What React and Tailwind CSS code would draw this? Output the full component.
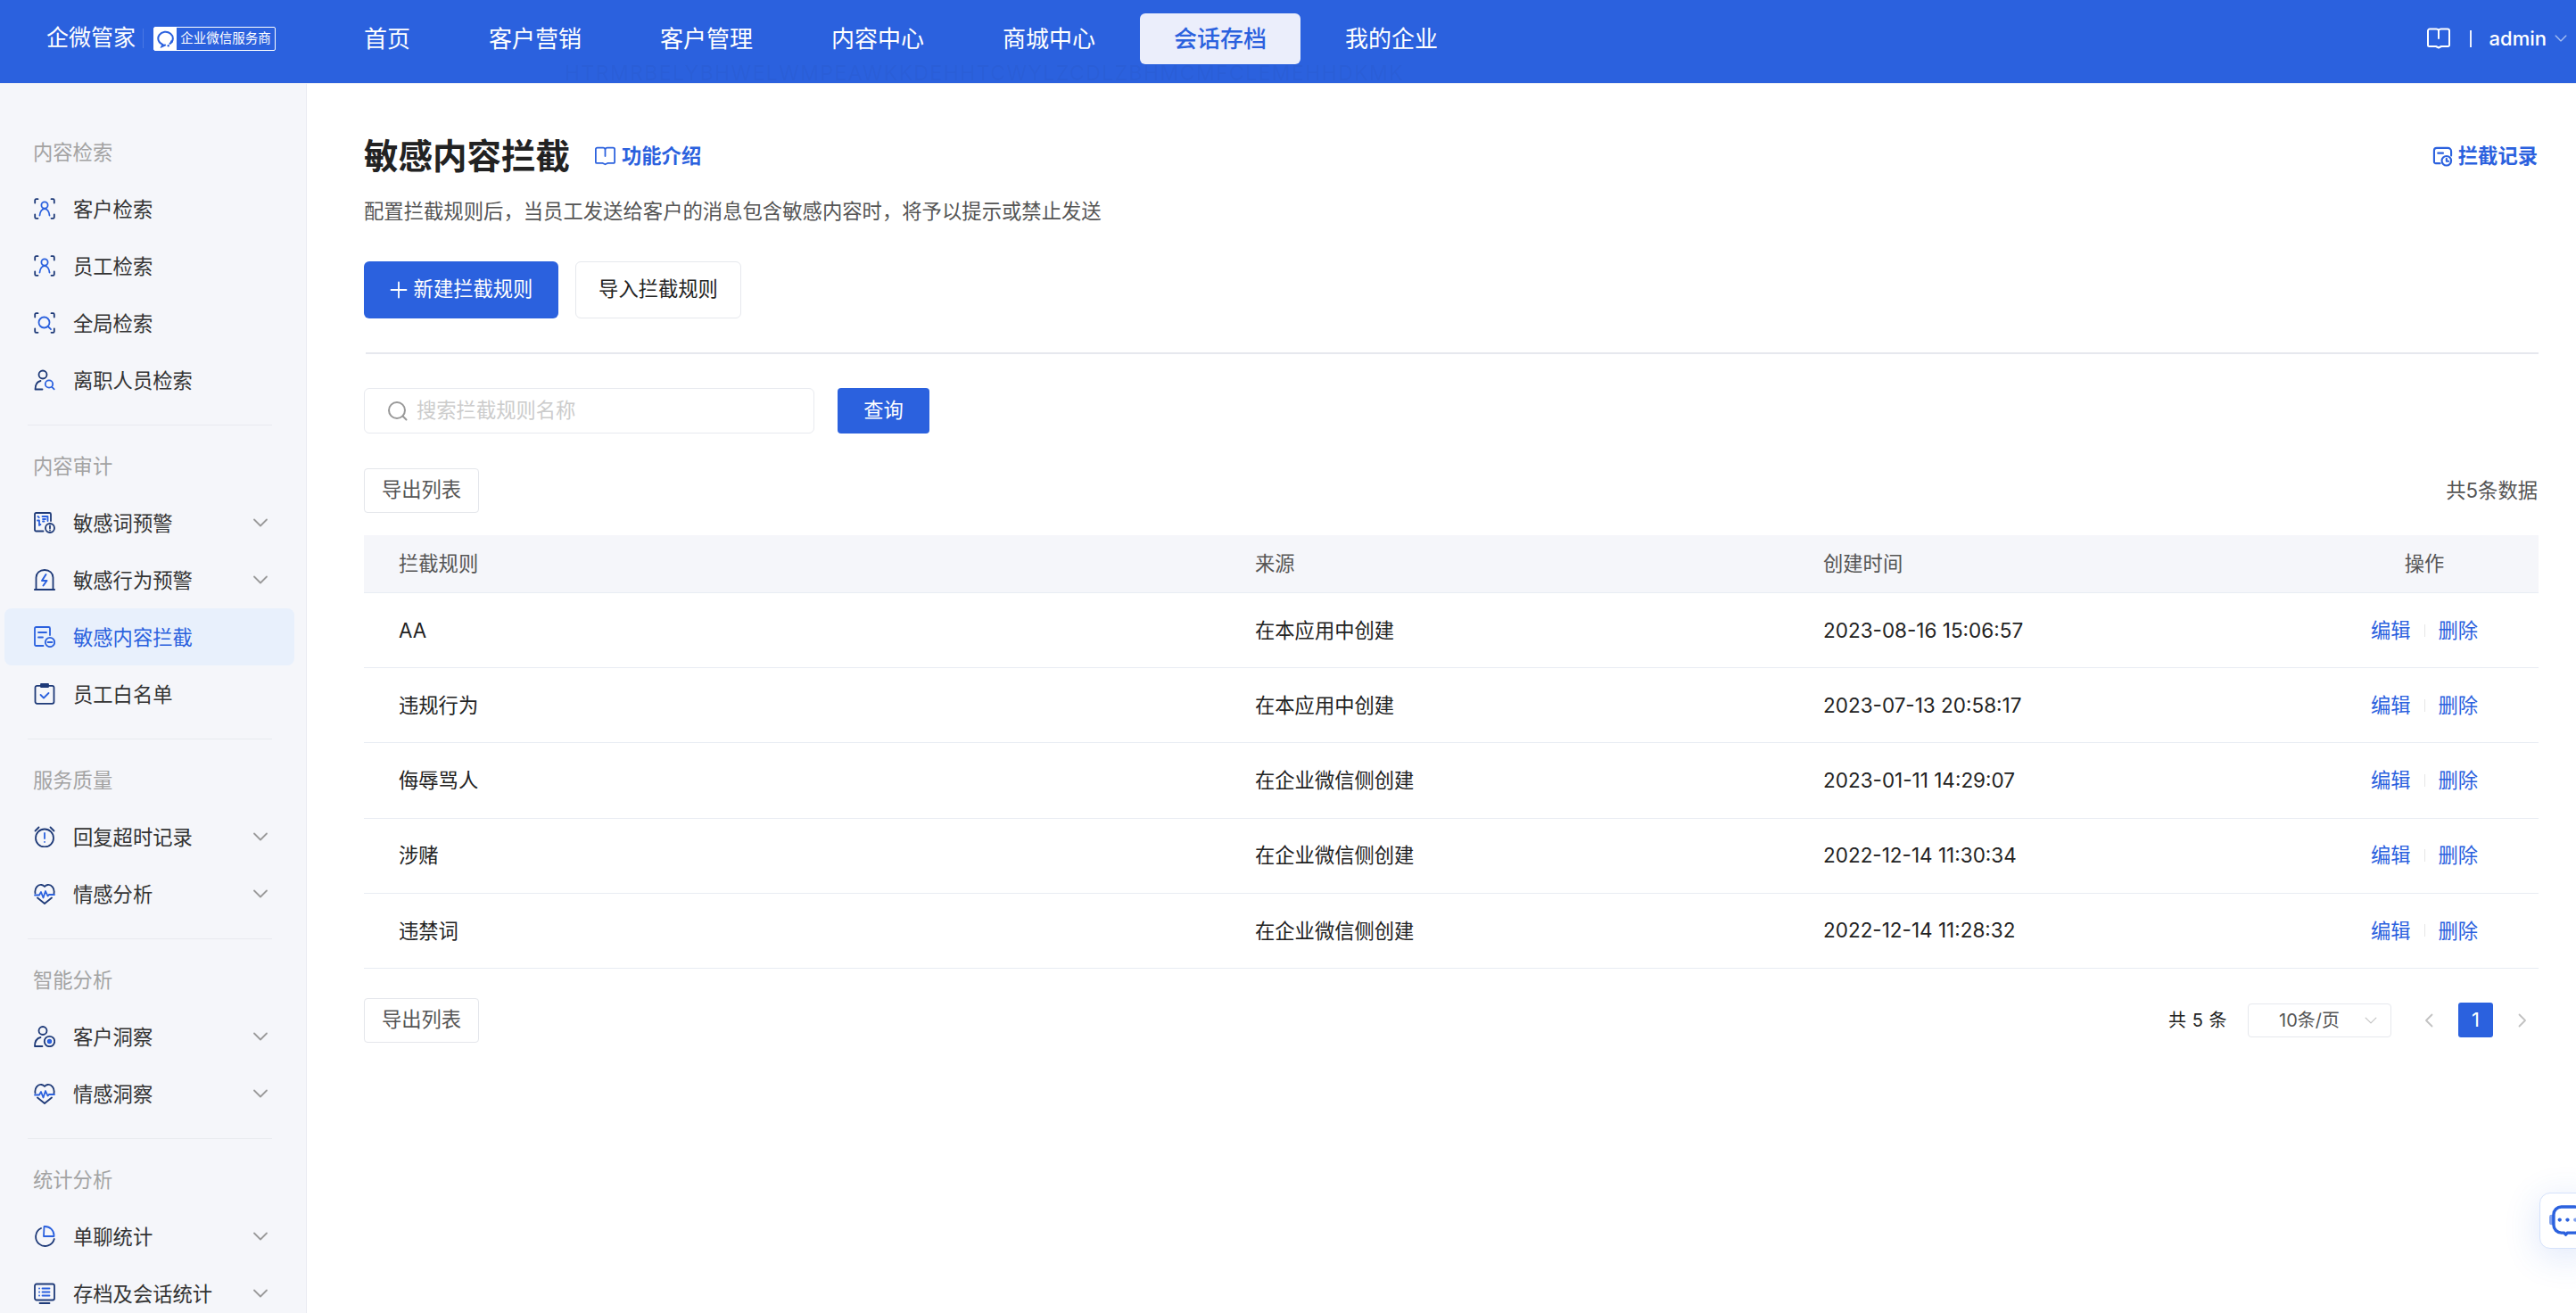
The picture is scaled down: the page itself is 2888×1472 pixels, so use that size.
import React from "react";

const FONT = "font-['Inter','Noto_Sans_CJK_SC',sans-serif]";
const NAVY = "#1e3a78";
const BLUE = "#2b61de";

function Ic({ children, className = "w-[24px] h-[24px]" }) {
  return (
    <svg viewBox="0 0 24 24" fill="none" strokeWidth="1.8" strokeLinecap="round" strokeLinejoin="round" className={`shrink-0 ${className}`}>
      {children}
    </svg>
  );
}

const Corners = () => (
  <path stroke={NAVY} d="M1.200 5.500V2.500a1.300 1.300 0 0 1 1.300-1.300H4.500M19.500 1.200h2a1.300 1.300 0 0 1 1.300 1.300v3M1.200 18.500v3a1.300 1.300 0 0 0 1.300 1.300H4.500M19.500 22.800h2a1.300 1.300 0 0 0 1.300-1.300v-3" />
);
const ScanUser = () => (
  <Ic>
    <Corners />
    <circle cx="12" cy="8" r="3.600" stroke={BLUE} />
    <path stroke={BLUE} d="M6.500 19.500c.4-4 2.500-7.500 5.500-7.500s5.100 3.500 5.500 7.500" />
  </Ic>
);
const ScanSearch = () => (
  <Ic>
    <Corners />
    <circle cx="11.500" cy="11.500" r="6" stroke={BLUE} />
    <path stroke={BLUE} d="M15.800 16l3.200 3.200" />
  </Ic>
);
const UserSearch = () => (
  <Ic>
    <circle cx="10" cy="6" r="4.500" stroke={NAVY} />
    <path stroke={NAVY} d="M1.500 22.500c0-5 1.500-8.500 6-9.500M1.500 22.500h8" />
    <circle cx="17" cy="16.500" r="4.200" stroke={BLUE} />
    <path stroke={BLUE} d="M20.200 19.800l2.500 2.500" />
  </Ic>
);
const WordAlert = () => (
  <Ic>
    <path stroke={NAVY} d="M10.500 21.500H2.500A1.500 1.500 0 0 1 1 20V2.500A1.500 1.500 0 0 1 2.500 1h15A1.500 1.500 0 0 1 19 2.500V10" />
    <path stroke={BLUE} d="M4.500 5l1.300 1.200M4 9.500h2v5.500l1.500-1M9.500 5h6v5M10 8h3M10 10.500h1.500" />
    <circle cx="18" cy="18" r="5" stroke={NAVY} />
    <path stroke={NAVY} d="M18 15.500v2.800M18 20.500v.1" />
  </Ic>
);
const BoltAlert = () => (
  <Ic>
    <path stroke={NAVY} d="M2.500 22V9.500C2.500 4.500 6.500 1 12 1s9.500 3.500 9.500 8.500V22M.8 23h22.400" />
    <path stroke={BLUE} strokeWidth="2" d="M13.500 6L9 13h5.500L10.500 18.500" />
  </Ic>
);
const DocMinus = () => (
  <Ic>
    <path stroke={BLUE} d="M10.500 22H2.500A1.500 1.500 0 0 1 1 20.500V2.500A1.500 1.500 0 0 1 2.500 1h14A1.500 1.500 0 0 1 18 2.500V10M5 7h9M5 12.500h5" />
    <circle cx="18" cy="18" r="5.200" stroke={BLUE} />
    <path stroke={BLUE} d="M15.500 18h5" />
  </Ic>
);
const ClipCheck = () => (
  <Ic>
    <rect x="1.500" y="2.800" width="21" height="20" rx="2" stroke={NAVY} />
    <path stroke={NAVY} d="M8 1h8v3H8z" />
    <path stroke={BLUE} d="M7.500 13l3.500 3.500 5.500-5.500" />
  </Ic>
);
const Alarm = () => (
  <Ic>
    <circle cx="12" cy="13.500" r="10" stroke={NAVY} />
    <path stroke={NAVY} d="M1.500 5.500L5.500 1.500M22.500 5.500l-4-4" />
    <path stroke={BLUE} d="M12 8v6M12 17.800v.1" />
  </Ic>
);
const HeartPulse = () => (
  <Ic>
    <path stroke={NAVY} d="M1.500 11.500C.5 5.500 4.500 1.500 8.500 2c1.500.2 2.700 1 3.500 2 .8-1 2-1.800 3.500-2 4-.5 8 3.500 7 9.500M4 16.500l8 6.500 8-6.500" />
    <path stroke={BLUE} d="M1 13.500h5l2-3.500 2.500 6.500L13 9l2.500 5.500 1.500-1.500h6" />
  </Ic>
);
const UserEye = () => (
  <Ic>
    <circle cx="10" cy="5.500" r="4.500" stroke={NAVY} />
    <path stroke={NAVY} d="M1 23c0-5 2-9 6.500-10M1 23h8.500" />
    <circle cx="17.500" cy="17.500" r="5.700" stroke={NAVY} />
    <circle cx="17.500" cy="17.500" r="1.800" fill={BLUE} stroke={BLUE} />
  </Ic>
);
const Pie = () => (
  <Ic>
    <path stroke={NAVY} d="M8 3A10.500 10.500 0 1 0 22.800 15" />
    <path stroke={BLUE} d="M11.500 1h1a10 10 0 0 1 10 10v1h-11.500z" />
  </Ic>
);
const Screen = () => (
  <Ic>
    <rect x="1" y="1.500" width="22" height="18" rx="2" stroke={NAVY} />
    <path stroke={NAVY} d="M6.500 23h11" />
    <path stroke={BLUE} d="M6 6.500h.1M9.500 6.500h8M6 10.500h.1M9.500 10.500h8M6 14.500h.1M9.500 14.500h8" />
  </Ic>
);

const Chevron = ({ color = "#9a9a9a", className = "w-[18px] h-[12px]", sw = 1.8 }) => (
  <svg viewBox="0 0 18 12" fill="none" stroke={color} strokeWidth={sw} strokeLinecap="round" strokeLinejoin="round" className={`shrink-0 ${className}`}>
    <path d="M2 2.500l7 7 7-7" />
  </svg>
);

const BookIcon = ({ color, className }) => (
  <svg viewBox="0 0 26 24" fill="none" stroke={color} strokeWidth="2" strokeLinecap="round" strokeLinejoin="round" className={`shrink-0 ${className}`}>
    <path d="M3 1.500h7.500c1 0 2 .7 2.500 1.500.5-.8 1.500-1.500 2.500-1.500H23a2 2 0 0 1 2 2v16a1.500 1.500 0 0 1-1.500 1.500H16l-3 1.500-3-1.500H2.500A1.500 1.500 0 0 1 1 19.500v-16a2 2 0 0 1 2-2z" />
    <path d="M13 3v9" />
  </svg>
);

const Wecom = () => (
  <svg viewBox="0 0 24 24" fill="none" className="w-[22px] h-[22px]" strokeWidth="2.200" strokeLinecap="round">
    <path stroke={BLUE} d="M17 18.500A9 8 0 1 0 8 19.500l-1 2.500 4-1.800" />
    <circle cx="19" cy="16" r="1.500" fill={BLUE} />
    <circle cx="15" cy="21" r="1.300" fill={BLUE} />
  </svg>
);

const SIDEBAR = [
  { label: "内容检索", items: [
    { t: "客户检索", i: ScanUser },
    { t: "员工检索", i: ScanUser },
    { t: "全局检索", i: ScanSearch },
    { t: "离职人员检索", i: UserSearch },
  ] },
  { label: "内容审计", items: [
    { t: "敏感词预警", i: WordAlert, c: true },
    { t: "敏感行为预警", i: BoltAlert, c: true },
    { t: "敏感内容拦截", i: DocMinus, a: true },
    { t: "员工白名单", i: ClipCheck },
  ] },
  { label: "服务质量", items: [
    { t: "回复超时记录", i: Alarm, c: true },
    { t: "情感分析", i: HeartPulse, c: true },
  ] },
  { label: "智能分析", items: [
    { t: "客户洞察", i: UserEye, c: true },
    { t: "情感洞察", i: HeartPulse, c: true },
  ] },
  { label: "统计分析", items: [
    { t: "单聊统计", i: Pie, c: true },
    { t: "存档及会话统计", i: Screen, c: true },
  ] },
];

const NAV = ["首页", "客户营销", "客户管理", "内容中心", "商城中心", "会话存档", "我的企业"];

const ROWS = [
  ["AA", "在本应用中创建", "2023-08-16 15:06:57"],
  ["违规行为", "在本应用中创建", "2023-07-13 20:58:17"],
  ["侮辱骂人", "在企业微信侧创建", "2023-01-11 14:29:07"],
  ["涉赌", "在企业微信侧创建", "2022-12-14 11:30:34"],
  ["违禁词", "在企业微信侧创建", "2022-12-14 11:28:32"],
];

const GRID = "grid grid-cols-[960px_637px_585px_256px] items-center";

function Sidebar() {
  return (
    <aside className="w-[344px] shrink-0 h-full bg-[#f5f6fa] border-r border-[#e9ebf1] pt-[44px] overflow-hidden">
      {SIDEBAR.map((g, gi) => (
        <div key={g.label}>
          {gi > 0 && <div className="mt-[18px] mb-[13px] mx-[31px] w-[274px] h-px bg-[#e8eaef]" />}
          <div className="h-[64px] flex items-center pl-[37px] pt-[2px] text-[22.300px] text-[#a3a3a3]">{g.label}</div>
          {g.items.map((it) => (
            <div
              key={it.t}
              className={`h-[64px] flex items-center ml-[5px] w-[325px] pl-[33px] rounded-[8px] ${it.a ? "bg-[#e8f0fc] text-[#2b61de]" : "text-[#333333]"}`}
            >
              <it.i />
              <span className="ml-[20px] mt-[2px] text-[22.300px] leading-[30px]">{it.t}</span>
              {it.c && (
                <span className="ml-auto mr-[29px] flex">
                  <Chevron />
                </span>
              )}
            </div>
          ))}
        </div>
      ))}
    </aside>
  );
}

function Main() {
  return (
    <main className="flex-1 min-w-0 bg-white pl-[64px] pr-[42px] pt-[56px] overflow-hidden">
      <div className="h-[50px] flex items-center">
        <h1 className="text-[38.500px] leading-[50px] font-bold text-[#222222]">敏感内容拦截</h1>
        <BookIcon color={BLUE} className="ml-[28px] w-[23px] h-[22px]" />
        <span className="ml-[7px] text-[22.300px] font-semibold text-[#2b61de]">功能介绍</span>
        <svg viewBox="0 0 24 24" fill="none" stroke={BLUE} strokeWidth="2.200" strokeLinecap="round" strokeLinejoin="round" className="ml-auto w-[23px] h-[23px]">
          <path d="M9 20H4a2 2 0 0 1-2-2V5a3 3 0 0 1 3-3h13a4 4 0 0 1 4 4v5" />
          <path d="M6.500 8h6" />
          <circle cx="16.500" cy="17" r="5.500" />
          <path d="M16.500 14.500V17.500h2.500" />
        </svg>
        <span className="ml-[6px] mr-[1px] text-[22.300px] font-semibold text-[#2b61de]">拦截记录</span>
      </div>
      <p className="mt-[22px] h-[30px] text-[22.350px] leading-[30px] text-[#555555]">配置拦截规则后，当员工发送给客户的消息包含敏感内容时，将予以提示或禁止发送</p>

      <div className="mt-[41px] flex gap-[19px]">
        <button className="w-[218px] h-[64px] rounded-[6px] pb-[2px] bg-[#2b61de] text-white text-[22.300px] flex items-center justify-center gap-[7px]">
          <svg viewBox="0 0 20 20" className="w-[20px] h-[20px] mt-[2px]" stroke="white" strokeWidth="1.800" strokeLinecap="round"><path d="M10 1.500v17M1.500 10h17" /></svg>
          新建拦截规则
        </button>
        <button className="w-[186px] h-[64px] rounded-[6px] pb-[2px] border border-[#e6e8ed] bg-white text-[#222222] text-[22.300px]">导入拦截规则</button>
      </div>

      <div className="mt-[38px] ml-[2px] h-[2px] bg-[#e6e8ee]" />

      <div className="mt-[38px] flex gap-[26px]">
        <div className="w-[505px] h-[51px] rounded-[6px] pb-[2px] border border-[#e8eaef] flex items-center pl-[25px]">
          <svg viewBox="0 0 24 24" fill="none" stroke="#999999" strokeWidth="2" strokeLinecap="round" className="w-[24px] h-[24px] mt-[2px]">
            <circle cx="11" cy="11" r="9" />
            <path d="M17.500 17.500l4 4" />
          </svg>
          <span className="ml-[9px] text-[22.300px] leading-[30px] text-[#cccccc]">搜索拦截规则名称</span>
        </div>
        <button className="w-[103px] h-[51px] rounded-[4px] pb-[2px] bg-[#2b61de] text-white text-[22.300px]">查询</button>
      </div>

      <div className="mt-[39px] flex items-center justify-between">
        <button className="w-[129px] h-[49.500px] rounded-[4px] pb-[3px] border border-[#e4e6eb] bg-white text-[#555555] text-[22.300px]">导出列表</button>
        <span className="text-[22.300px] text-[#555555] mr-[1px] mb-[1px]">共5条数据</span>
      </div>

      <div className="mt-[25.500px]">
        <div className={`${GRID} h-[65px] bg-[#f5f6fa] border-b border-[#e8ecf3] text-[22.300px] text-[#555555]`}>
          <span className="pl-[39px]">拦截规则</span>
          <span className="pl-[39px]">来源</span>
          <span className="pl-[39px]">创建时间</span>
          <span className="text-center">操作</span>
        </div>
        {ROWS.map((r) => (
          <div key={r[0]} className={`${GRID} h-[84.200px] border-b border-[#e8ecf3] text-[22.300px] text-[#222222]`}>
            <span className="pl-[39px]">{r[0]}</span>
            <span className="pl-[39px]">{r[1]}</span>
            <span className="pl-[39px] text-[22.500px]">{r[2]}</span>
            <span className="flex items-center justify-center text-[#2b61de]">
              <span>编辑</span>
              <span className="mx-[15px] w-px h-[14px] bg-[#e6e6e6]" />
              <span>删除</span>
            </span>
          </div>
        ))}
      </div>

      <div className="mt-[33px] flex items-center">
        <button className="w-[129px] h-[50px] rounded-[4px] pb-[3px] border border-[#e4e6eb] bg-white text-[#555555] text-[22.300px]">导出列表</button>
        <span className="ml-auto text-[20px] text-[#222222] tracking-[0.5px]">共 5 条</span>
        <div className="ml-[23px] w-[161px] h-[38px] rounded-[4px] border border-[#e6e8ed] flex items-center pl-[34px] pr-[14px] text-[20px] text-[#555555]">
          <span>10条/页</span>
          <Chevron color="#c4c4c4" sw={1.4} className="ml-auto w-[16px] h-[10px]" />
        </div>
        <svg viewBox="0 0 10 16" fill="none" stroke="#c2c2c2" strokeWidth="1.800" strokeLinecap="round" strokeLinejoin="round" className="ml-[37px] w-[10px] h-[16px]"><path d="M8.500 1.500L2 8l6.500 6.500" /></svg>
        <span className="ml-[28px] w-[39px] h-[39px] rounded-[3px] bg-[#2b61de] text-white text-[22px] flex items-center justify-center">1</span>
        <svg viewBox="0 0 10 16" fill="none" stroke="#c2c2c2" strokeWidth="1.800" strokeLinecap="round" strokeLinejoin="round" className="ml-[28px] mr-[13px] w-[10px] h-[16px]"><path d="M1.500 1.500L8 8l-6.500 6.500" /></svg>
      </div>
    </main>
  );
}

export default function App() {
  return (
    <div className={`${FONT} relative w-[2888px] h-[1472px] overflow-hidden flex flex-col bg-white`}>
      <header className="h-[94px] shrink-0 bg-[#2b61de] border-b border-[#e6eaf3] flex items-center text-white pl-[52px] pb-[7px]">
        <span className="text-[25px] w-[103px] whitespace-nowrap">企微管家</span>
        <span className="ml-[5px] w-px h-[22px] bg-white/15" />
        <div className="ml-[11px] w-[137px] h-[27px] border-[1.500px] border-white rounded-[2px] flex items-stretch">
          <div className="w-[25px] bg-white flex items-center justify-center shrink-0">
            <Wecom />
          </div>
          <span className="flex-1 text-center text-[14.500px] leading-[24px] whitespace-nowrap">企业微信服务商</span>
        </div>
        <nav className="ml-[61px] flex items-center gap-[12px]">
          {NAV.map((n) => (
            <span
              key={n}
              className={`h-[57px] px-[38px] rounded-[6px] text-[26px] flex items-center ${n === "会话存档" ? "bg-[#ebeefb] text-[#2b61de] font-medium" : ""}`}
            >
              {n}
            </span>
          ))}
        </nav>
        <div className="ml-auto flex items-center pr-[9px]">
          <BookIcon color="white" className="w-[26px] h-[24px]" />
          <span className="ml-[22px] w-[2px] h-[19px] bg-white/90" />
          <span className="ml-[20px] text-[22px] font-medium">admin</span>
          <Chevron color="#a9c0f2" sw={1.6} className="ml-[8px] w-[16px] h-[10px]" />
        </div>
      </header>

      <span className="absolute left-[633px] top-[68px] text-[23px] leading-[28px] tracking-[1.400px] whitespace-nowrap text-[#1e3a78]/[0.07]">HTRMRBELYBHWELWMPEAWKKDEHHTCWYLZCDLZBHMCMFCLEMEHHDKMK</span>

      <div className="flex-1 min-h-0 flex">
        <Sidebar />
        <Main />
      </div>

      <div className="absolute left-[2847px] top-[1337px] w-[60px] h-[63px] rounded-[12px] bg-white border border-[#d5e2fb] shadow-[0_8px_40px_rgba(43,97,222,0.16)] pl-[10px] flex items-center">
        <svg viewBox="0 0 40 36" fill="none" className="w-[39px] h-[35px] shrink-0">
          <rect x="0" y="11" width="5" height="12" rx="2.500" fill="#7fa0ee" />
          <path d="M14 2h15a9 9 0 0 1 9 9v12a9 9 0 0 1-9 9h-8l-2 2-2-2h-3a9 9 0 0 1-9-9V11a9 9 0 0 1 9-9z" stroke={BLUE} strokeWidth="3.500" />
          <circle cx="12" cy="17" r="2.200" fill={BLUE} />
          <circle cx="21" cy="17" r="2.200" fill={BLUE} />
          <circle cx="30" cy="17" r="2.200" fill="#7fa0ee" />
        </svg>
      </div>
    </div>
  );
}
